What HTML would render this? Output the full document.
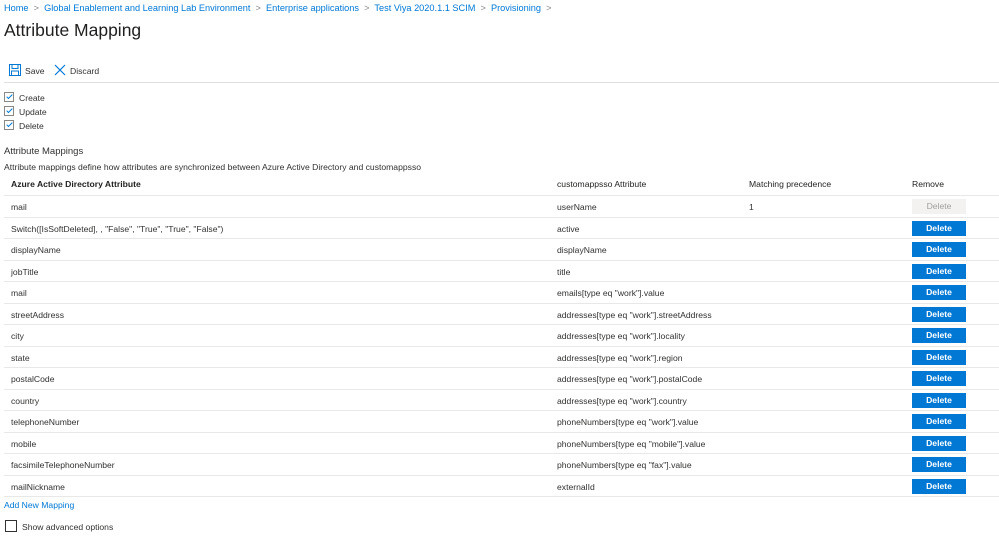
<!DOCTYPE html>
<html><head><style>
body{margin:0;width:999px;height:538px;background:#fff;font-family:"Liberation Sans",sans-serif;color:#323130;position:relative;overflow:hidden;font-size:8.6px}
.a{position:absolute;white-space:nowrap}
.bc{color:#0078d4;font-size:9.2px}
.sep{color:#8a8886}
.row{position:absolute;left:4px;width:995px;height:21.5px;border-bottom:1.5px solid #e8e8e8;box-sizing:border-box}
.row span{position:absolute;top:6px}
.btn{position:absolute;left:908px;top:3px;width:54px;height:15px;background:#0078d4;color:#fff;font-weight:bold;text-align:center;line-height:15px;font-size:8.6px}
.btn.dis{background:#f3f2f1;color:#a19f9d;font-weight:normal}
.cb{position:absolute;left:4px;width:10px;height:10px;border:1px solid #8a8886;box-sizing:border-box}
.cb:after{content:"";position:absolute;left:3px;top:0px;width:2px;height:5px;border:solid #0078d4;border-width:0 1px 1px 0;transform:rotate(45deg)}
</style></head><body>
<div class="a bc" style="left:4px;top:3px">Home <span class="sep">&nbsp;&gt;&nbsp;</span> Global Enablement and Learning Lab Environment <span class="sep">&nbsp;&gt;&nbsp;</span> Enterprise applications <span class="sep">&nbsp;&gt;&nbsp;</span> Test Viya 2020.1.1 SCIM <span class="sep">&nbsp;&gt;&nbsp;</span> Provisioning <span class="sep">&nbsp;&gt;</span></div>
<div class="a" style="left:4px;top:20px;font-size:17.5px;color:#201f1e">Attribute Mapping</div>
<svg class="a" style="left:9px;top:64px" width="12" height="12" viewBox="0 0 12 12"><rect x="0.5" y="0.5" width="11" height="11" fill="none" stroke="#0078d4"/><rect x="3" y="0.5" width="6" height="4" fill="none" stroke="#0078d4"/><rect x="2.5" y="7" width="7" height="4.5" fill="none" stroke="#0078d4"/></svg>
<div class="a" style="left:25px;top:66px">Save</div>
<svg class="a" style="left:54px;top:64px" width="12" height="12"><path d="M1 1L11 11M11 1L1 11" stroke="#0078d4" stroke-width="1.2"/></svg>
<div class="a" style="left:70px;top:66px">Discard</div>
<div class="a" style="left:4px;top:82px;width:995px;height:1px;background:#e1dfdd"></div>
<div class="cb" style="top:92px"></div><div class="a" style="left:19px;top:93px">Create</div>
<div class="cb" style="top:106px"></div><div class="a" style="left:19px;top:107px">Update</div>
<div class="cb" style="top:120px"></div><div class="a" style="left:19px;top:121px">Delete</div>
<div class="a" style="left:4px;top:146px;font-size:9.5px">Attribute Mappings</div>
<div class="a" style="left:4px;top:162px">Attribute mappings define how attributes are synchronized between Azure Active Directory and customappsso</div>
<div class="row" style="top:174px;height:22px;color:#201f1e"><span style="left:7px;top:5px;font-weight:bold">Azure Active Directory Attribute</span><span style="left:553px;top:5px">customappsso Attribute</span><span style="left:745px;top:5px">Matching precedence</span><span style="left:908px;top:5px">Remove</span></div>
<div class="row" style="top:196px"><span style="left:7px">mail</span><span style="left:553px">userName</span><span style="left:745px">1</span><div class="btn dis">Delete</div></div>
<div class="row" style="top:217.5px"><span style="left:7px">Switch([IsSoftDeleted], , "False", "True", "True", "False")</span><span style="left:553px">active</span><div class="btn">Delete</div></div>
<div class="row" style="top:239px"><span style="left:7px">displayName</span><span style="left:553px">displayName</span><div class="btn">Delete</div></div>
<div class="row" style="top:260.5px"><span style="left:7px">jobTitle</span><span style="left:553px">title</span><div class="btn">Delete</div></div>
<div class="row" style="top:282px"><span style="left:7px">mail</span><span style="left:553px">emails[type eq "work"].value</span><div class="btn">Delete</div></div>
<div class="row" style="top:303.5px"><span style="left:7px">streetAddress</span><span style="left:553px">addresses[type eq "work"].streetAddress</span><div class="btn">Delete</div></div>
<div class="row" style="top:325px"><span style="left:7px">city</span><span style="left:553px">addresses[type eq "work"].locality</span><div class="btn">Delete</div></div>
<div class="row" style="top:346.5px"><span style="left:7px">state</span><span style="left:553px">addresses[type eq "work"].region</span><div class="btn">Delete</div></div>
<div class="row" style="top:368px"><span style="left:7px">postalCode</span><span style="left:553px">addresses[type eq "work"].postalCode</span><div class="btn">Delete</div></div>
<div class="row" style="top:389.5px"><span style="left:7px">country</span><span style="left:553px">addresses[type eq "work"].country</span><div class="btn">Delete</div></div>
<div class="row" style="top:411px"><span style="left:7px">telephoneNumber</span><span style="left:553px">phoneNumbers[type eq "work"].value</span><div class="btn">Delete</div></div>
<div class="row" style="top:432.5px"><span style="left:7px">mobile</span><span style="left:553px">phoneNumbers[type eq "mobile"].value</span><div class="btn">Delete</div></div>
<div class="row" style="top:454px"><span style="left:7px">facsimileTelephoneNumber</span><span style="left:553px">phoneNumbers[type eq "fax"].value</span><div class="btn">Delete</div></div>
<div class="row" style="top:475.5px"><span style="left:7px">mailNickname</span><span style="left:553px">externalId</span><div class="btn">Delete</div></div>
<div class="a" style="left:4px;top:500px;color:#0078d4">Add New Mapping</div>
<div class="a" style="left:5px;top:520px;width:12px;height:12px;border:1px solid #323130;box-sizing:border-box"></div>
<div class="a" style="left:22px;top:522px">Show advanced options</div>
</body></html>
